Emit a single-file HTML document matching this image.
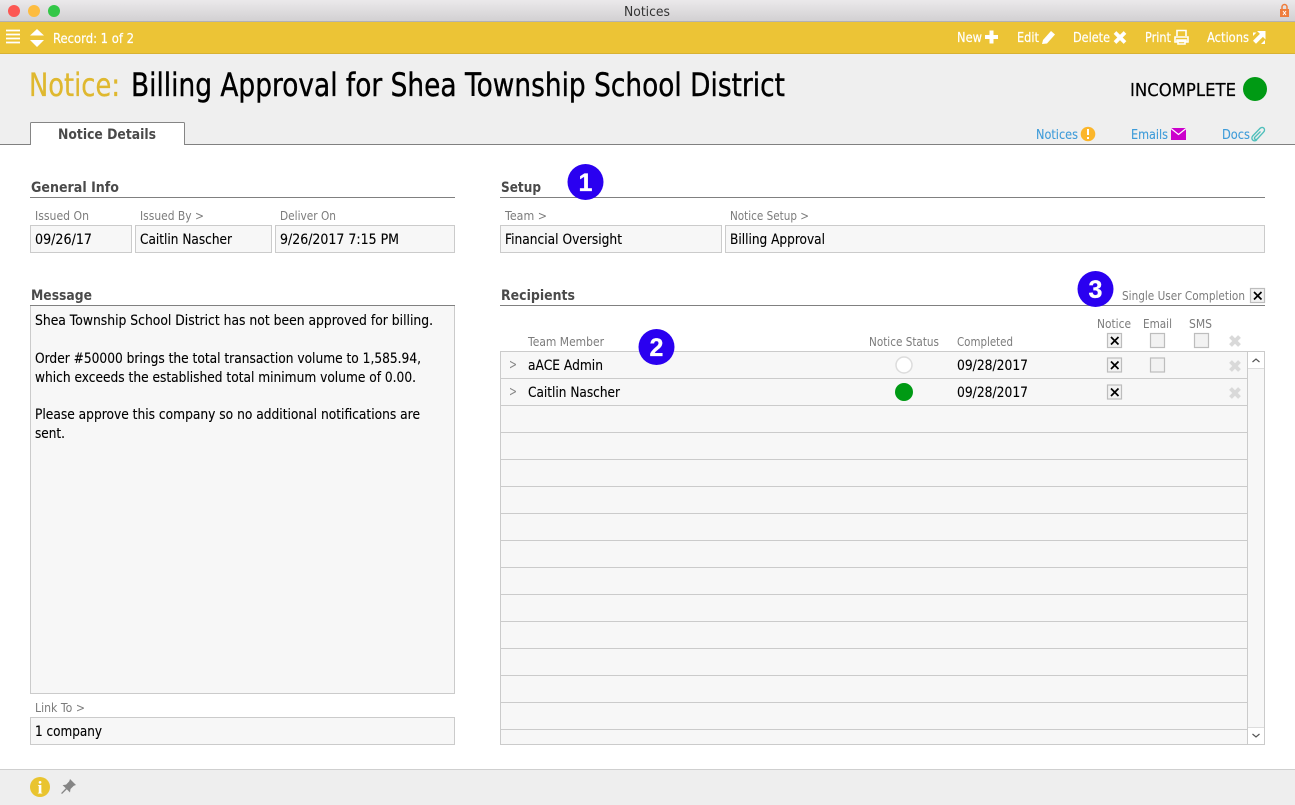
<!DOCTYPE html>
<html lang="en"><head><meta charset="utf-8"><title>Notices</title>
<style>
html,body{margin:0;padding:0;background:#fff;width:1295px;height:805px;overflow:hidden}
svg{display:block}
text{font-family:"DejaVu Sans","Liberation Sans",sans-serif;font-size:14.500px;fill:#000;stroke:#000;stroke-width:.12}
.w{fill:#fff;stroke:#fff;stroke-width:.2;font-size:13.500px}
.h{fill:#4a4a4a;stroke:none;font-size:14.500px;font-weight:bold}
.l{fill:#7c7c7c;stroke:none;font-size:12.500px}
.a{fill:#3d9bd9;stroke:#3d9bd9;stroke-width:.1;font-size:13.500px}
.f{fill:#f7f7f7;stroke:#cbcbcb;stroke-width:1}
.c{fill:#f2f2f2;stroke:#bdbdbd;stroke-width:1.200}
.x{stroke:#000;stroke-width:1.700;fill:none}
.gx{stroke:#d9d9d9;stroke-width:4;fill:none}
.n{fill:#fff;stroke:#fff;stroke-width:.3;font-size:25px;font-weight:bold;font-family:"Liberation Sans",sans-serif}
</style></head><body>
<svg width="1295" height="805" viewBox="0 0 1295 805" xmlns="http://www.w3.org/2000/svg">
<defs><linearGradient id="tb" x1="0" y1="0" x2="0" y2="1"><stop offset="0" stop-color="#ebe9eb"/><stop offset="1" stop-color="#d1cfd1"/></linearGradient></defs>

<!-- title bar -->
<rect width="1295" height="22" fill="url(#tb)"/>
<rect y="21" width="1295" height="1" fill="#b3b1b3"/>
<circle cx="14" cy="11" r="6" fill="#fc5753"/><circle cx="34" cy="11" r="6" fill="#fdbc40"/><circle cx="54" cy="11" r="6" fill="#33c748"/>
<text x="624" y="16" textLength="46" lengthAdjust="spacingAndGlyphs" style="font-size:13px;fill:#333;stroke:none">Notices</text>
<rect x="1280" y="9" width="9" height="8" fill="#ef7d3c"/><path d="M1282 9V7a2.500 2.500 0 0 1 5 0v2" fill="none" stroke="#ef7d3c" stroke-width="1.500"/><path d="M1283 11l3 4M1286 11l-3 4" stroke="#fff" stroke-width="1"/>

<!-- toolbar -->
<rect y="22" width="1295" height="32" fill="#ecc436"/>
<rect y="53" width="1295" height="1" fill="#d8b233"/>
<path d="M6 30.500h14M6 34.500h14M6 38.500h14M6 42.500h14" stroke="#fff" stroke-width="1.800"/>
<path d="M30 35.500l7-6.500 7 6.500zM30 40h14l-7 7z" fill="#fff"/>
<text class="w" x="53" y="43" textLength="81" lengthAdjust="spacingAndGlyphs">Record: 1 of 2</text>
<text class="w" x="957" y="42" textLength="25" lengthAdjust="spacingAndGlyphs">New</text>
<path d="M985 35h4.500v-4.500h4v4.500h4.500v4h-4.500v4.500h-4v-4.500h-4.500z" fill="#fff"/>
<text class="w" x="1017" y="42" textLength="22" lengthAdjust="spacingAndGlyphs">Edit</text>
<path d="M1042 44l1-4 8-9 4 3.500-8 9z" fill="#fff"/>
<text class="w" x="1073" y="42" textLength="37" lengthAdjust="spacingAndGlyphs">Delete</text>
<path d="M1115 32.500l10 10M1125 32.500l-10 10" stroke="#fff" stroke-width="3.800"/>
<text class="w" x="1145" y="42" textLength="26" lengthAdjust="spacingAndGlyphs">Print</text>
<path d="M1177 36v-5.500h9V36M1175 37h13v5h-2v-2h-9v2h-2zM1178 41.500h7v2.500h-7z" fill="none" stroke="#fff" stroke-width="1.600"/>
<text class="w" x="1207" y="42" textLength="42" lengthAdjust="spacingAndGlyphs">Actions</text>
<path d="M1257 31h8.500v8.500l-2.600-2.600-6.900 6.900-3-3 6.900-6.900zM1253 32.500h3.500l-3.500 3.500zM1265 44h-4l4-4z" fill="#fff"/>

<!-- header -->
<rect y="54" width="1295" height="90" fill="#efefef"/>
<rect y="144" width="1295" height="1" fill="#808080"/>
<text x="29" y="96" textLength="91" lengthAdjust="spacingAndGlyphs" style="font-size:32px;fill:#dfb82f;stroke:#dfb82f;stroke-width:.3">Notice:</text>
<text x="131" y="96" textLength="654" lengthAdjust="spacingAndGlyphs" style="font-size:32px;stroke-width:.4">Billing Approval for Shea Township School District</text>
<text x="1130" y="96" textLength="106" lengthAdjust="spacingAndGlyphs" style="font-size:18px;stroke-width:.2">INCOMPLETE</text>
<circle cx="1255" cy="89" r="12" fill="#009a14"/>
<path d="M30.500 145v-21.500a1 1 0 0 1 1-1h152a1 1 0 0 1 1 1V145" fill="#fff" stroke="#858585"/>
<rect x="31" y="143" width="153" height="3" fill="#fff"/>
<text class="h" x="58" y="139" textLength="98" lengthAdjust="spacingAndGlyphs">Notice Details</text>
<text class="a" x="1036" y="139" textLength="42" lengthAdjust="spacingAndGlyphs">Notices</text>
<circle cx="1088" cy="134" r="7.300" fill="#fbb62b"/><path d="M1088 129v6M1088 137v2" stroke="#fff" stroke-width="2"/>
<text class="a" x="1131" y="139" textLength="37" lengthAdjust="spacingAndGlyphs">Emails</text>
<rect x="1171" y="128" width="15" height="12" fill="#cc00cc"/><path d="M1171 128.500l7.500 6 7.500-6" fill="none" stroke="#fff" stroke-width="1.200"/>
<text class="a" x="1222" y="139" textLength="28" lengthAdjust="spacingAndGlyphs">Docs</text>
<path d="M1260.500 131.500l-5.500 5.500c-1.600 1.600.6 3.600 2.200 2l6.300-6.800c2.800-3-.8-6.600-3.600-3.700l-7 7.200c-2.900 3.100 1 7 4 4" fill="none" stroke="#4fbfbb" stroke-width="1.400"/>

<!-- general info -->
<text class="h" x="31" y="192" textLength="88" lengthAdjust="spacingAndGlyphs">General Info</text>
<rect x="30" y="197" width="425" height="1" fill="#808080"/>
<text class="l" x="35" y="220" textLength="54" lengthAdjust="spacingAndGlyphs">Issued On</text>
<text class="l" x="140" y="220" textLength="64" lengthAdjust="spacingAndGlyphs">Issued By &gt;</text>
<text class="l" x="280" y="220" textLength="56" lengthAdjust="spacingAndGlyphs">Deliver On</text>
<rect class="f" x="30.500" y="225.500" width="101" height="27"/>
<rect class="f" x="135.500" y="225.500" width="136" height="27"/>
<rect class="f" x="275.500" y="225.500" width="179" height="27"/>
<text x="35" y="244" textLength="57" lengthAdjust="spacingAndGlyphs">09/26/17</text>
<text x="140" y="244" textLength="92" lengthAdjust="spacingAndGlyphs">Caitlin Nascher</text>
<text x="280" y="244" textLength="119" lengthAdjust="spacingAndGlyphs">9/26/2017 7:15 PM</text>

<!-- setup -->
<text class="h" x="501" y="192" textLength="40" lengthAdjust="spacingAndGlyphs">Setup</text>
<rect x="500" y="197" width="765" height="1" fill="#808080"/>
<text class="l" x="505" y="220" textLength="42" lengthAdjust="spacingAndGlyphs">Team &gt;</text>
<text class="l" x="730" y="220" textLength="79" lengthAdjust="spacingAndGlyphs">Notice Setup &gt;</text>
<rect class="f" x="500.500" y="225.500" width="221" height="27"/>
<rect class="f" x="725.500" y="225.500" width="539" height="27"/>
<text x="505" y="244" textLength="117" lengthAdjust="spacingAndGlyphs">Financial Oversight</text>
<text x="730" y="244" textLength="95" lengthAdjust="spacingAndGlyphs">Billing Approval</text>

<!-- message -->
<text class="h" x="31" y="300" textLength="61" lengthAdjust="spacingAndGlyphs">Message</text>
<rect class="f" x="30.500" y="305.500" width="424" height="388"/>
<rect x="30" y="305" width="425" height="1" fill="#808080"/>
<text x="35" y="325" textLength="398" lengthAdjust="spacingAndGlyphs">Shea Township School District has not been approved for billing.</text>
<text x="35" y="363" textLength="386" lengthAdjust="spacingAndGlyphs">Order #50000 brings the total transaction volume to 1,585.94,</text>
<text x="35" y="382" textLength="381" lengthAdjust="spacingAndGlyphs">which exceeds the established total minimum volume of 0.00.</text>
<text x="35" y="419" textLength="385" lengthAdjust="spacingAndGlyphs">Please approve this company so no additional notifications are</text>
<text x="35" y="438" textLength="30" lengthAdjust="spacingAndGlyphs">sent.</text>
<text class="l" x="35" y="712" textLength="50" lengthAdjust="spacingAndGlyphs">Link To &gt;</text>
<rect class="f" x="30.500" y="717.500" width="424" height="27"/>
<text x="35" y="736" textLength="67" lengthAdjust="spacingAndGlyphs">1 company</text>

<!-- recipients -->
<text class="h" x="501" y="300" textLength="74" lengthAdjust="spacingAndGlyphs">Recipients</text>
<rect x="500" y="305" width="765" height="1" fill="#808080"/>
<text class="l" x="1122" y="300" textLength="123" lengthAdjust="spacingAndGlyphs">Single User Completion</text>
<rect class="c" x="1250.500" y="288.500" width="14" height="14"/><path class="x" d="M1254 292l7.500 7.500M1261.500 292l-7.500 7.500"/>

<text class="l" x="528" y="346" textLength="76" lengthAdjust="spacingAndGlyphs">Team Member</text>
<text class="l" x="869" y="346" textLength="70" lengthAdjust="spacingAndGlyphs">Notice Status</text>
<text class="l" x="957" y="346" textLength="56" lengthAdjust="spacingAndGlyphs">Completed</text>
<text class="l" x="1097" y="328" textLength="34" lengthAdjust="spacingAndGlyphs">Notice</text>
<text class="l" x="1143" y="328" textLength="29" lengthAdjust="spacingAndGlyphs">Email</text>
<text class="l" x="1189" y="328" textLength="23" lengthAdjust="spacingAndGlyphs">SMS</text>
<rect class="c" x="1107.500" y="333.500" width="14" height="14"/><path class="x" d="M1111 337l7.500 7.500M1118.500 337l-7.500 7.500"/>
<rect class="c" x="1150.500" y="333.500" width="14" height="14"/>
<rect class="c" x="1194.500" y="333.500" width="14" height="14"/>
<path class="gx" d="M1230.500 336.500l9 9M1239.500 336.500l-9 9"/>

<!-- table -->
<rect class="f" x="500.500" y="351.500" width="764" height="393"/>
<g fill="#cbcbcb">
<rect x="501" y="378" width="746" height="1"/><rect x="501" y="405" width="746" height="1"/><rect x="501" y="432" width="746" height="1"/><rect x="501" y="459" width="746" height="1"/><rect x="501" y="486" width="746" height="1"/><rect x="501" y="513" width="746" height="1"/><rect x="501" y="540" width="746" height="1"/><rect x="501" y="567" width="746" height="1"/><rect x="501" y="594" width="746" height="1"/><rect x="501" y="621" width="746" height="1"/><rect x="501" y="648" width="746" height="1"/><rect x="501" y="675" width="746" height="1"/><rect x="501" y="702" width="746" height="1"/><rect x="501" y="729" width="746" height="1"/>
<rect x="1247" y="352" width="1" height="392"/>
</g>
<rect x="1248" y="352" width="16" height="16" fill="#fff"/><rect x="1248" y="368" width="16" height="1" fill="#ddd"/>
<rect x="1248" y="728" width="16" height="16" fill="#fff"/><rect x="1248" y="727" width="16" height="1" fill="#ddd"/>
<path d="M1252.500 362l3.500-3 3.500 3M1252.500 734l3.500 3 3.500-3" fill="none" stroke="#555" stroke-width="1.200"/>

<text x="509" y="369" textLength="8" lengthAdjust="spacingAndGlyphs" style="fill:#888;stroke:none">&gt;</text>
<text x="509" y="396" textLength="8" lengthAdjust="spacingAndGlyphs" style="fill:#888;stroke:none">&gt;</text>
<text x="528" y="370" textLength="75" lengthAdjust="spacingAndGlyphs">aACE Admin</text>
<text x="528" y="397" textLength="92" lengthAdjust="spacingAndGlyphs">Caitlin Nascher</text>
<circle cx="904" cy="365" r="8" fill="#fff" stroke="#dcdcdc" stroke-width="1.500"/>
<circle cx="904" cy="392" r="9" fill="#009a14"/>
<text x="957" y="370" textLength="71" lengthAdjust="spacingAndGlyphs">09/28/2017</text>
<text x="957" y="397" textLength="71" lengthAdjust="spacingAndGlyphs">09/28/2017</text>
<rect class="c" x="1107.500" y="358" width="14" height="14"/><path class="x" d="M1111 361.500l7.500 7.500M1118.500 361.500l-7.500 7.500"/>
<rect class="c" x="1150.500" y="358" width="14" height="14"/>
<rect class="c" x="1107.500" y="385" width="14" height="14"/><path class="x" d="M1111 388.500l7.500 7.500M1118.500 388.500l-7.500 7.500"/>
<path class="gx" d="M1230.500 361.500l9 9M1239.500 361.500l-9 9M1230.500 388.500l9 9M1239.500 388.500l-9 9"/>

<!-- annotations -->
<circle cx="585.500" cy="182" r="18" fill="#2a00f0"/><text class="n" x="585.500" y="191" text-anchor="middle">1</text>
<circle cx="656.500" cy="347" r="18" fill="#2a00f0"/><text class="n" x="656.500" y="356" text-anchor="middle">2</text>
<circle cx="1095.500" cy="289" r="18" fill="#2a00f0"/><text class="n" x="1095.500" y="298" text-anchor="middle">3</text>

<!-- footer -->
<rect y="769" width="1295" height="36" fill="#eeeeee"/>
<rect y="769" width="1295" height="1" fill="#cfcfcf"/>
<circle cx="40" cy="787" r="10" fill="#e9c42f"/>
<text x="40" y="793.500" text-anchor="middle" style="font-size:18px;font-weight:bold;fill:#fff;stroke:none;font-family:'Liberation Serif',serif">i</text>
<path d="M70 779l6 6-2.200.8-3.300 3.200-.5 3.500-3.200-3.200-4.800 4.700-.9-.9 4.700-4.800-3.200-3.200 3.500-.5 3.200-3.300z" fill="#858585"/>
</svg>
</body></html>
